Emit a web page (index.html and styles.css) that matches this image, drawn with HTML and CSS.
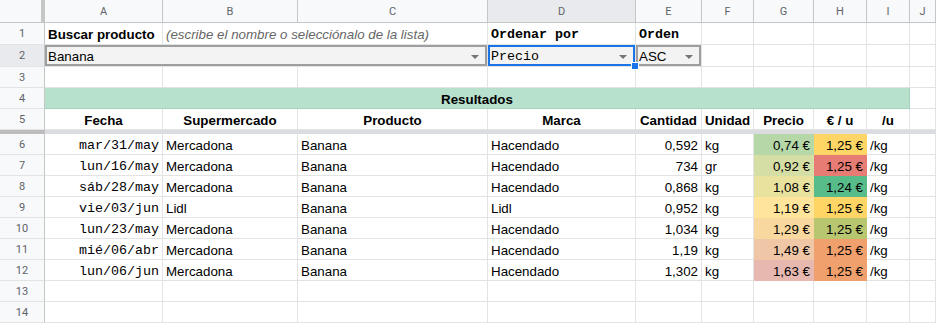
FILE: index.html
```html
<!DOCTYPE html>
<html lang="es">
<head>
<meta charset="UTF-8">
<title>Comparador de precios</title>
<link rel="stylesheet" href="styles.css">
</head>
<body>
<div class="sheet" id="sheet">
  <!-- cabecera de columnas -->
  <div class="corner"></div>
  <div class="ch">A</div>
  <div class="ch">B</div>
  <div class="ch">C</div>
  <div class="ch sel">D</div>
  <div class="ch">E</div>
  <div class="ch">F</div>
  <div class="ch">G</div>
  <div class="ch">H</div>
  <div class="ch">I</div>
  <div class="ch">J</div>

  <!-- fila 1 -->
  <div class="rh">1</div>
  <div class="c b">Buscar producto</div>
  <div class="c hint span2">(escribe el nombre o selecciónalo de la lista)</div>
  <div class="c b mono">Ordenar por</div>
  <div class="c b mono">Orden</div>
  <div class="c"></div><div class="c"></div><div class="c"></div><div class="c"></div><div class="c"></div>

  <!-- fila 2 -->
  <div class="rh sel">2</div>
  <div class="c input span3">Banana<span class="arrow"></span></div>
  <div class="c input active mono">Precio<span class="arrow"></span><span class="handle"></span></div>
  <div class="c input">ASC<span class="arrow"></span></div>
  <div class="c"></div><div class="c"></div><div class="c"></div><div class="c"></div><div class="c"></div>

  <!-- fila 3 -->
  <div class="rh">3</div>
  <div class="c"></div><div class="c"></div><div class="c"></div><div class="c"></div><div class="c"></div>
  <div class="c"></div><div class="c"></div><div class="c"></div><div class="c"></div><div class="c"></div>

  <!-- fila 4 -->
  <div class="rh">4</div>
  <div class="c title span9">Resultados</div>
  <div class="c"></div>

  <!-- fila 5 -->
  <div class="rh">5</div>
  <div class="c b ctr">Fecha</div>
  <div class="c b ctr">Supermercado</div>
  <div class="c b ctr">Producto</div>
  <div class="c b ctr">Marca</div>
  <div class="c b ctr">Cantidad</div>
  <div class="c b ctr">Unidad</div>
  <div class="c b ctr">Precio</div>
  <div class="c b ctr">€ / u</div>
  <div class="c b ctr">/u</div>
  <div class="c"></div>

  <!-- línea de inmovilizar -->
  <div class="freeze-rh"></div>
  <div class="freeze span10"></div>
</div>

<script>
const rows = [
  ['mar/31/may','Mercadona','Banana','Hacendado','0,592','kg','0,74 €','1,25 €','#b6d7a8','#ffd666'],
  ['lun/16/may','Mercadona','Banana','Hacendado','734','gr','0,92 €','1,25 €','#d5dea4','#e67c73'],
  ['sáb/28/may','Mercadona','Banana','Hacendado','0,868','kg','1,08 €','1,24 €','#e9e29f','#57bb8a'],
  ['vie/03/jun','Lidl','Banana','Lidl','0,952','kg','1,19 €','1,25 €','#fee59b','#ffd666'],
  ['lun/23/may','Mercadona','Banana','Hacendado','1,034','kg','1,29 €','1,25 €','#f8d89e','#b7c66f'],
  ['mié/06/abr','Mercadona','Banana','Hacendado','1,19','kg','1,49 €','1,25 €','#efc7a6','#f0a06c'],
  ['lun/06/jun','Mercadona','Banana','Hacendado','1,302','kg','1,63 €','1,25 €','#e7b8b0','#f0a06c']
];

const sheet = document.getElementById('sheet');

function cell(cls, text, bg){
  const d = document.createElement('div');
  d.className = 'c ' + cls;
  d.textContent = text || '';
  if(bg){ d.style.background = bg; }
  sheet.appendChild(d);
}

rows.forEach((r,i)=>{
  const rh = document.createElement('div');
  rh.className = 'rh';
  rh.textContent = i + 6;
  sheet.appendChild(rh);
  cell('mono r', r[0]);
  cell('', r[1]);
  cell('', r[2]);
  cell('', r[3]);
  cell('r', r[4]);
  cell('', r[5]);
  cell('r fill', r[6], r[8]);
  cell('r fill', r[7], r[9]);
  cell('', '/kg');
  cell('', '');
});

// filas vacías 13 y 14
[13,14].forEach(n=>{
  const rh = document.createElement('div');
  rh.className = 'rh';
  rh.textContent = n;
  sheet.appendChild(rh);
  for(let k=0;k<10;k++){ cell('', ''); }
});
</script>
</body>
</html>
```

FILE: styles.css
```css
body{margin:0;overflow:hidden;background:#fff;font-family:"Liberation Sans", Arial, sans-serif;font-size:13.33px;color:#000;}

.sheet{
  display:grid;
  grid-template-columns:45px 118px 135px 190px 148px 66px 52px 60px 53px 43px 26px;
  grid-template-rows:23px 22px 22px 21px 21px 21px 4px repeat(9, 21px);
}

.corner{background:#f8f9fa;border-bottom:1px solid #c4c7c5;border-right:4px solid #c4c7c5;box-sizing:border-box;}
.ch{
  background:#f8f9fa;color:#5f6368;font-family:Roboto, "Liberation Sans", sans-serif;font-size:11px;
  display:flex;align-items:center;justify-content:center;
  border-right:1px solid #c4c7c5;border-bottom:1px solid #c4c7c5;box-sizing:border-box;
}
.rh{
  background:#f8f9fa;color:#5f6368;font-family:Roboto, "Liberation Sans", sans-serif;font-size:11px;
  display:flex;align-items:center;justify-content:center;
  border-right:1px solid #c4c7c5;border-bottom:1px solid #e2e3e3;box-sizing:border-box;
}
.sel{background:#e8eaed;}

.c{
  display:flex;align-items:center;padding:2px 3px 0;white-space:nowrap;overflow:visible;
  border-right:1px solid #e2e3e3;border-bottom:1px solid #e2e3e3;box-sizing:border-box;
  position:relative;min-width:0;
}
.b{font-weight:bold;}
.ctr{justify-content:center;}
.r{justify-content:flex-end;}
.mono{font-family:"Liberation Mono", "DejaVu Sans Mono", monospace;}
.hint{font-style:italic;color:#666;}

.span2{grid-column:span 2;}
.span3{grid-column:span 3;}
.span9{grid-column:span 9;}
.span10{grid-column:span 10;}

.input{background:#f3f3f3;box-shadow:inset 0 0 0 2px #9e9e9e;}
.input.active{box-shadow:inset 0 0 0 2px #1a73e8;}
.arrow{
  margin-left:auto;margin-right:5px;width:0;height:0;
  border-left:4px solid transparent;border-right:4px solid transparent;border-top:4px solid #757575;
}
.handle{
  position:absolute;right:-4px;bottom:-4px;width:6px;height:6px;
  background:#1a73e8;border:1px solid #fff;box-sizing:content-box;z-index:2;
}

.title{background:#b7e1cd;font-weight:bold;justify-content:center;border-color:#a3d3bb;}

.freeze-rh{background:#bdbdbd;}
.freeze{background:#dadce0;}

.fill{border-color:transparent;}
```
